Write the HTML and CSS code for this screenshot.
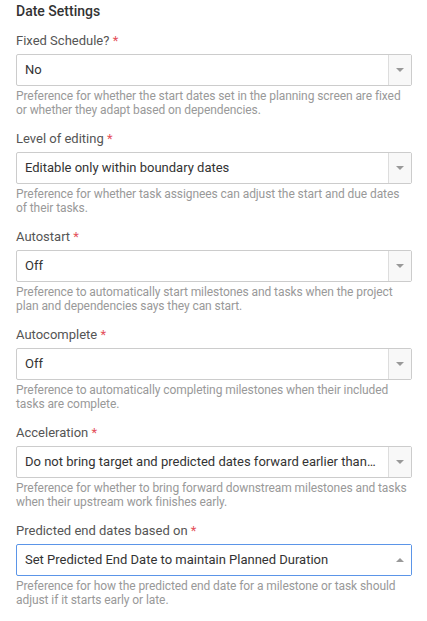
FILE: index.html
```html
<!DOCTYPE html>
<html>
<head>
<meta charset="utf-8">
<link rel="stylesheet" href="styles.css">
</head>
<body>
<div class="panel">
  <h2 class="title">Date Settings</h2>

  <div class="field">
    <div class="label">Fixed Schedule? <span class="req">*</span></div>
    <div class="select"><span class="value">No</span><span class="arrow"><span class="tri down"></span></span></div>
    <div class="help">Preference for whether the start dates set in the planning screen are fixed or whether they adapt based on dependencies.</div>
  </div>

  <div class="field">
    <div class="label">Level of editing <span class="req">*</span></div>
    <div class="select"><span class="value">Editable only within boundary dates</span><span class="arrow"><span class="tri down"></span></span></div>
    <div class="help">Preference for whether task assignees can adjust the start and due dates of their tasks.</div>
  </div>

  <div class="field">
    <div class="label">Autostart <span class="req">*</span></div>
    <div class="select"><span class="value">Off</span><span class="arrow"><span class="tri down"></span></span></div>
    <div class="help">Preference to automatically start milestones and tasks when the project plan and dependencies says they can start.</div>
  </div>

  <div class="field">
    <div class="label">Autocomplete <span class="req">*</span></div>
    <div class="select"><span class="value">Off</span><span class="arrow"><span class="tri down"></span></span></div>
    <div class="help">Preference to automatically completing milestones when their included tasks are complete.</div>
  </div>

  <div class="field">
    <div class="label">Acceleration <span class="req">*</span></div>
    <div class="select"><span class="value">Do not bring target and predicted dates forward earlier than planned dates</span><span class="arrow"><span class="tri down"></span></span></div>
    <div class="help">Preference for whether to bring forward downstream milestones and tasks when their upstream work finishes early.</div>
  </div>

  <div class="field">
    <div class="label">Predicted end dates based on <span class="req">*</span></div>
    <div class="select open"><span class="value">Set Predicted End Date to maintain Planned Duration</span><span class="arrow"><span class="tri up"></span></span></div>
    <div class="help">Preference for how the predicted end date for a milestone or task should adjust if it starts early or late.</div>
  </div>
</div>
</body>
</html>
```

FILE: styles.css
```css
html, body {
  margin: 0;
  padding: 0;
  background: #ffffff;
}
body {
  font-family: Roboto, "Liberation Sans", Arial, sans-serif;
}
.panel {
  padding: 0 15px 0 16px;
}
.title {
  margin: 0;
  padding-top: 1px;
  font-size: 14px;
  font-weight: 500;
  line-height: 20px;
  color: #333333;
}
.field {
  margin-top: 10px;
}
.field + .field {
  margin-top: 12px;
}
.label {
  font-size: 13px;
  line-height: 20px;
  color: #555555;
  margin-bottom: 3px;
}
.req {
  color: #e4505a;
}
.select {
  display: flex;
  align-items: stretch;
  height: 32px;
  box-sizing: border-box;
  border: 1px solid #cccccc;
  border-radius: 2px;
  background: #ffffff;
}
.value {
  flex: 1;
  min-width: 0;
  padding-left: 8px;
  padding-right: 12px;
  font-size: 13px;
  line-height: 30px;
  color: #333333;
  white-space: nowrap;
  overflow: hidden;
  text-overflow: ellipsis;
}
.arrow {
  width: 22px;
  flex: none;
  display: flex;
  align-items: center;
  justify-content: center;
  border-left: 1px solid #dddddd;
  background: #f8f8f8;
}
.select.open {
  border-color: #5b95e8;
}
.select.open .arrow {
  border-left: none;
  background: #ffffff;
  width: 23px;
}
.tri {
  width: 0;
  height: 0;
  border-left: 4px solid transparent;
  border-right: 4px solid transparent;
}
.tri.down {
  border-top: 4px solid #999999;
}
.tri.up {
  border-bottom: 4px solid #999999;
}
.help {
  margin-top: 3px;
  font-size: 12px;
  line-height: 14px;
  letter-spacing: -0.08px;
  color: #999999;
}
```
